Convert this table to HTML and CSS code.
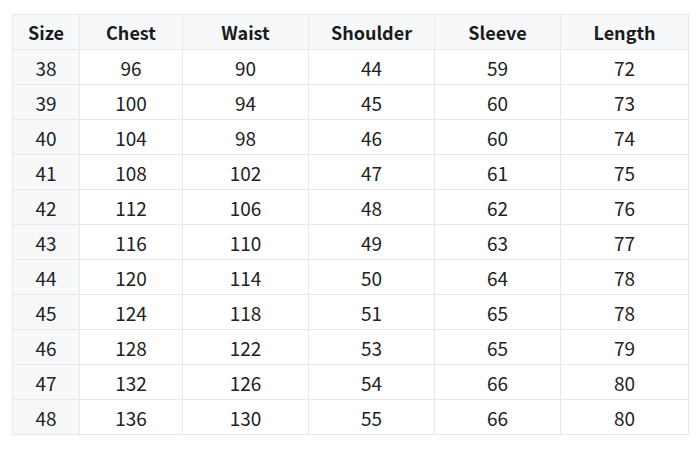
FILE: index.html
```html
<!DOCTYPE html>
<html>
<head>
<meta charset="utf-8">
<link rel="stylesheet" href="styles.css">
</head>
<body>
<table class="size-table">
<colgroup>
<col class="c-size"><col class="c-chest"><col class="c-waist"><col class="c-shoulder"><col class="c-sleeve"><col class="c-length">
</colgroup>
<thead>
<tr><th>Size</th><th>Chest</th><th>Waist</th><th>Shoulder</th><th>Sleeve</th><th>Length</th></tr>
</thead>
<tbody>
<tr><td>38</td><td>96</td><td>90</td><td>44</td><td>59</td><td>72</td></tr>
<tr><td>39</td><td>100</td><td>94</td><td>45</td><td>60</td><td>73</td></tr>
<tr><td>40</td><td>104</td><td>98</td><td>46</td><td>60</td><td>74</td></tr>
<tr><td>41</td><td>108</td><td>102</td><td>47</td><td>61</td><td>75</td></tr>
<tr><td>42</td><td>112</td><td>106</td><td>48</td><td>62</td><td>76</td></tr>
<tr><td>43</td><td>116</td><td>110</td><td>49</td><td>63</td><td>77</td></tr>
<tr><td>44</td><td>120</td><td>114</td><td>50</td><td>64</td><td>78</td></tr>
<tr><td>45</td><td>124</td><td>118</td><td>51</td><td>65</td><td>78</td></tr>
<tr><td>46</td><td>128</td><td>122</td><td>53</td><td>65</td><td>79</td></tr>
<tr><td>47</td><td>132</td><td>126</td><td>54</td><td>66</td><td>80</td></tr>
<tr><td>48</td><td>136</td><td>130</td><td>55</td><td>66</td><td>80</td></tr>
</tbody>
</table>
</body>
</html>
```
FILE: styles.css
```css
html, body {
  margin: 0;
  background: #ffffff;
}
body {
  padding: 14px 12px;
  font-family: "Noto Sans CJK SC", "Noto Sans", sans-serif;
  color: #222222;
}
.size-table {
  border-collapse: collapse;
  table-layout: fixed;
  width: 676px;
}
.c-size { width: 67px; }
.c-chest { width: 103px; }
.c-waist { width: 126px; }
.c-shoulder { width: 126px; }
.c-sleeve { width: 126px; }
.c-length { width: 128px; }
.size-table th,
.size-table td {
  border: 1px solid #e8e8ea;
  height: 35px;
  padding: 0;
  text-align: center;
  vertical-align: middle;
  box-sizing: border-box;
}
.size-table th {
  background: #f7f8fa;
  font-size: 18px;
  font-weight: 700;
  color: #1a1a1a;
}
.size-table td {
  font-size: 19px;
  font-weight: 400;
}
.size-table td:first-child {
  background: #f7f8fa;
}
```
